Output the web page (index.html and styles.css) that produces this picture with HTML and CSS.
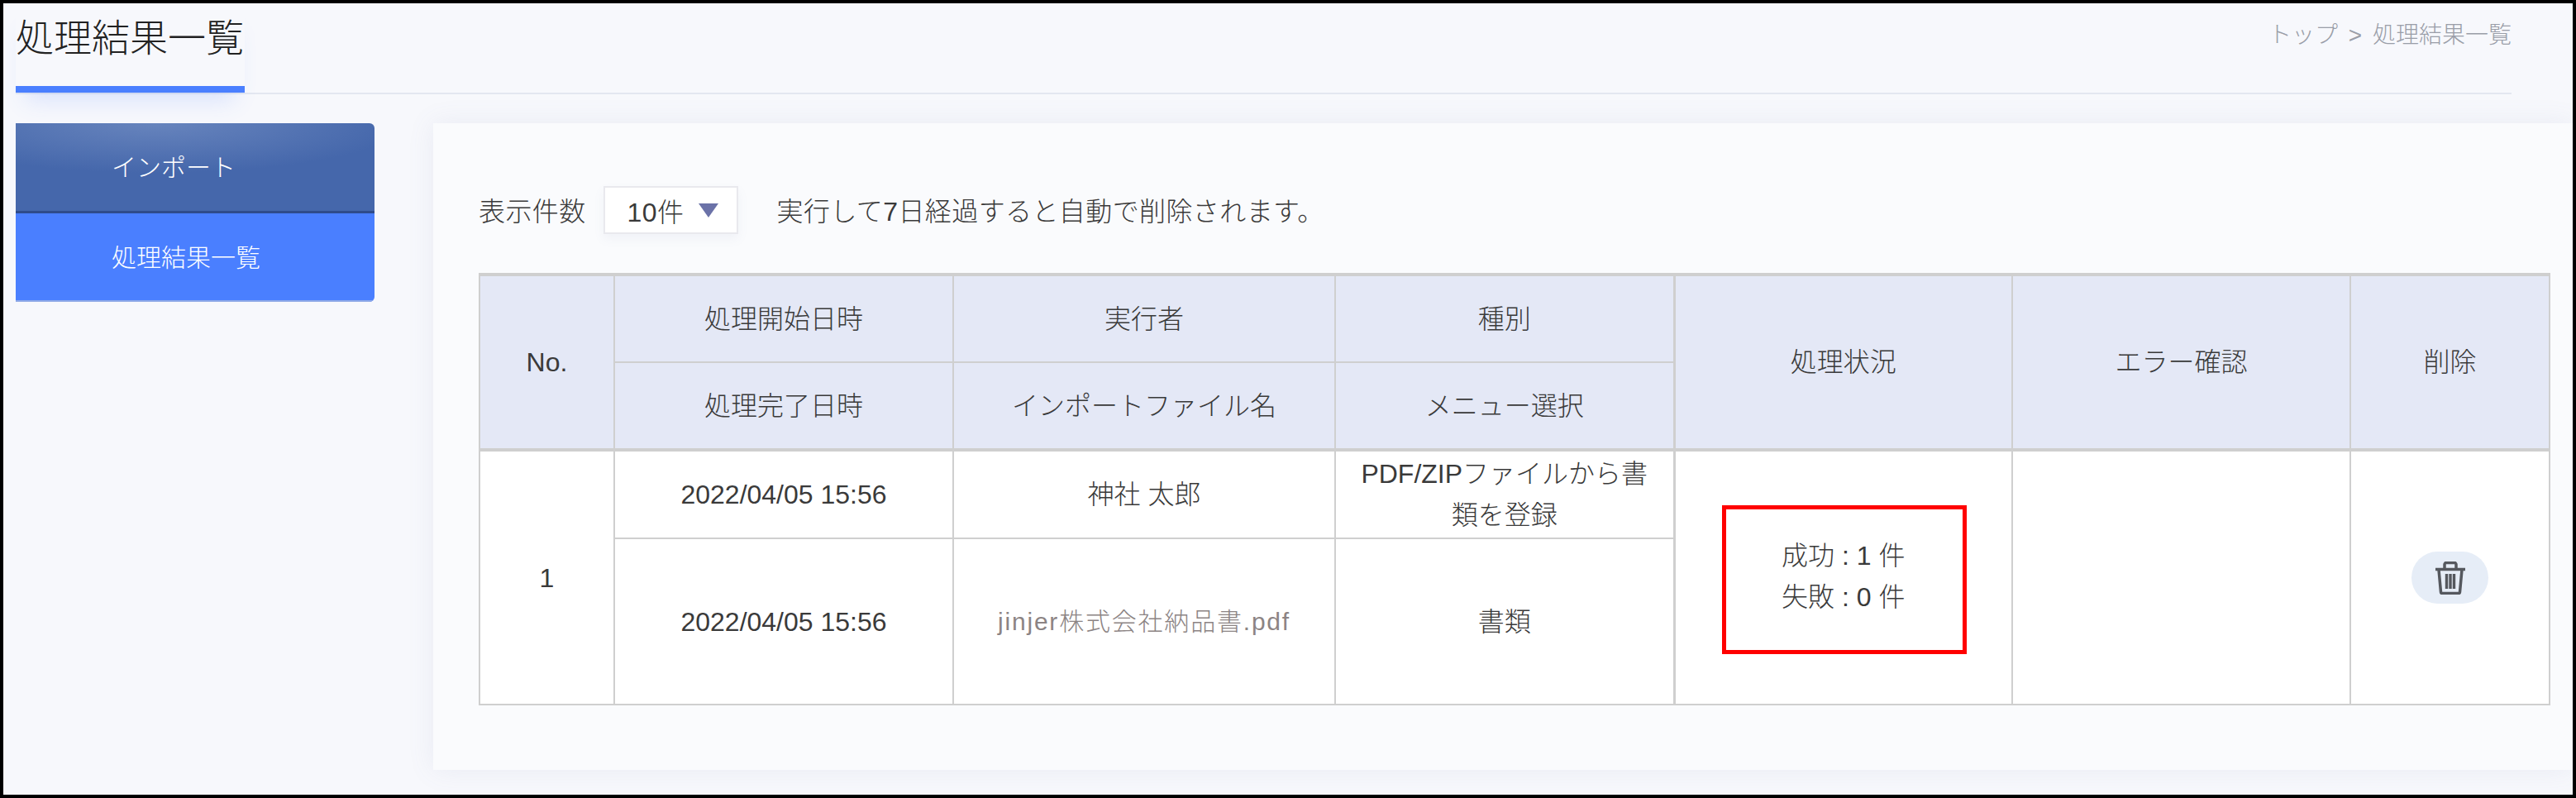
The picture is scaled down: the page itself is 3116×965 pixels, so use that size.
FILE: index.html
```html
<!DOCTYPE html>
<html lang="ja">
  <head>
    <meta charset="UTF-8" />
    <title>処理結果一覧</title>
    <link rel="stylesheet" href="styles.css">
  </head>
  <body>
    <div class="frame">
      <header class="page-head">
        <h1 class="page-title">処理結果一覧</h1>
        <div class="breadcrumb">トップ &gt; 処理結果一覧</div>
      </header>
      <div class="page-body">
        <nav class="sidebar">
          <a class="side-item side-import">インポート</a>
          <a class="side-item side-active">処理結果一覧</a>
        </nav>
        <main class="panel">
          <div class="toolbar">
            <span>表示件数</span>
            <div class="count-select">
              <span>10件</span>
              <i class="count-arrow"></i>
            </div>
            <span class="toolbar-note">実行して7日経過すると自動で削除されます。</span>
          </div>
          <table class="result-table">
            <colgroup>
              <col class="col-no">
              <col class="col-date">
              <col class="col-user">
              <col class="col-type">
              <col class="col-status">
              <col class="col-error">
              <col class="col-delete">
            </colgroup>
            <thead>
              <tr class="row-head-1">
                <th rowspan="2">No.</th>
                <th>処理開始日時</th>
                <th>実行者</th>
                <th>種別</th>
                <th rowspan="2" class="thick-left">処理状況</th>
                <th rowspan="2">エラー確認</th>
                <th rowspan="2">削除</th>
              </tr>
              <tr class="row-head-2">
                <th>処理完了日時</th>
                <th>インポートファイル名</th>
                <th>メニュー選択</th>
              </tr>
            </thead>
            <tbody>
              <tr class="row-body-1">
                <td rowspan="2">1</td>
                <td>2022/04/05 15:56</td>
                <td>神社 太郎</td>
                <td class="type-cell">PDF/ZIPファイルから書類を登録</td>
                <td rowspan="2" class="status-cell thick-left">
                  成功 : 1 件<br>失敗 : 0 件
                  <div class="red-mark"></div>
                </td>
                <td rowspan="2"></td>
                <td rowspan="2" class="delete-cell">
                  <button class="delete-btn">
                    <svg width="36" height="40" viewBox="0 0 36 40" fill="none" stroke="#55585e" stroke-width="3.5">
                      <path d="M0 9.5H36" />
                      <path d="M11 8V3.5C11 2.5 12 1.5 13 1.5H23C24 1.5 25 2.500 25 3.500V8" />
                      <path d="M4 10L6.500 37C6.600 38 7.200 38.500 8 38.500H28C28.800 38.500 29.400 38 29.500 37L32 10" />
                      <path d="M13.500 15V33M18 15V33M22.500 15V33" stroke-width="3.400" />
                    </svg>
                  </button>
                </td>
              </tr>
              <tr class="row-body-2">
                <td>2022/04/05 15:56</td>
                <td class="file-name">jinjer株式会社納品書.pdf</td>
                <td>書類</td>
              </tr>
            </tbody>
          </table>
        </main>
      </div>
    </div>
  </body>
</html>
```

FILE: styles.css
```css
* {
  box-sizing: border-box;
}
body {
  margin: 0;
  font-family: "Liberation Sans", "Noto Sans CJK JP", sans-serif;
  font-weight: 300;
  color: #3a3a3a;
  font-size: 32px;
}
.frame {
  height: 965px;
  border: 4px solid #000;
  background: #f7f8fc;
  overflow: hidden;
  display: flex;
  flex-direction: column;
}
.page-head {
  display: flex;
  justify-content: space-between;
  margin: 0 74px 0 15px;
  border-bottom: 2px solid #e3e7f0;
}
.page-title {
  margin: 0;
  width: 277px;
  padding: 14px 0 30px;
  font-size: 46px;
  font-weight: 300;
  line-height: 56px;
  white-space: nowrap;
  color: #222;
  border-bottom: 8px solid #4a7fff;
  box-shadow: 0 22px 26px -12px rgba(74, 127, 255, 0.16);
}
.breadcrumb {
  padding-top: 19px;
  font-size: 28px;
  line-height: 40px;
  word-spacing: 5px;
  color: #9a9ea8;
}
.page-body {
  display: flex;
  padding-top: 35px;
}
.sidebar {
  flex-shrink: 0;
  width: 434px;
  margin-left: 15px;
  height: 216px;
  border-radius: 0 6px 6px 0;
  overflow: hidden;
}
.side-item {
  display: flex;
  align-items: center;
  padding-left: 116px;
  font-size: 30px;
  color: white;
}
.side-import {
  height: 109px;
  padding-bottom: 5px;
  background: radial-gradient(ellipse 300px 60px at 170px 0, #6784bd, #4567ab);
  border-bottom: 3px solid #2f4c8c;
}
.side-active {
  height: 107px;
  padding-bottom: 3px;
  background: #4a7fff;
  border-bottom: 2px solid #8fa9e6;
}
.panel {
  flex: 1;
  min-width: 0;
  height: 782px;
  margin-left: 71px;
  padding: 76px 29px 0 55px;
  background: #fafbfd;
  box-shadow: 0 0 30px rgba(110, 120, 170, 0.1);
}
.toolbar {
  display: flex;
  align-items: center;
  height: 58px;
  margin-bottom: 47px;
  letter-spacing: 0.4px;
}
.toolbar > span {
  position: relative;
  top: -1px;
}
.count-select {
  display: flex;
  align-items: center;
  width: 163px;
  height: 58px;
  margin-left: 21px;
  padding-left: 27px;
  background: white;
  border: 2px solid #e9e9ee;
  box-shadow: 0 6px 12px rgba(120, 130, 170, 0.07);
}
.count-arrow {
  width: 0;
  height: 0;
  margin-left: 18px;
  border-left: 12px solid transparent;
  border-right: 12px solid transparent;
  border-top: 17px solid #6b72a8;
}
.toolbar-note {
  margin-left: 47px;
}
.result-table {
  width: 2504px;
  table-layout: fixed;
  border-collapse: collapse;
  text-align: center;
}
.col-no {
  width: 163px;
}
.col-date,
.col-type {
  width: 410px;
}
.col-user {
  width: 462px;
}
.col-status,
.col-error {
  width: 409px;
}
.col-delete {
  width: 241px;
}
.result-table th,
.result-table td {
  border: 2px solid #cfcfcf;
  padding: 0;
  font-weight: 300;
  line-height: 50px;
}
.result-table th {
  background: #e4e8f6;
}
.result-table td {
  background: white;
}
.result-table thead tr:first-child th {
  border-top-width: 4px;
}
.result-table thead {
  border-bottom: 4px solid #cfcfcf;
}
.result-table .thick-left {
  border-left-width: 3px;
}
.row-head-1 {
  height: 106px;
}
.row-head-2 {
  height: 106px;
}
.row-body-1 {
  height: 107px;
}
.row-body-2 {
  height: 201px;
}
.result-table .type-cell {
  padding: 0 20px;
}
.result-table .file-name {
  font-size: 30px;
  letter-spacing: 1.8px;
  color: #8c8484;
}
.result-table .status-cell {
  position: relative;
  padding-bottom: 4px;
}
.red-mark {
  position: absolute;
  left: 56px;
  top: 65px;
  width: 296px;
  height: 180px;
  border: 5px solid #f00;
}
.delete-btn {
  display: inline-flex;
  align-items: center;
  justify-content: center;
  width: 93px;
  height: 63px;
  padding: 0;
  border: none;
  border-radius: 32px;
  background: #e6edf7;
  vertical-align: middle;
}
```
